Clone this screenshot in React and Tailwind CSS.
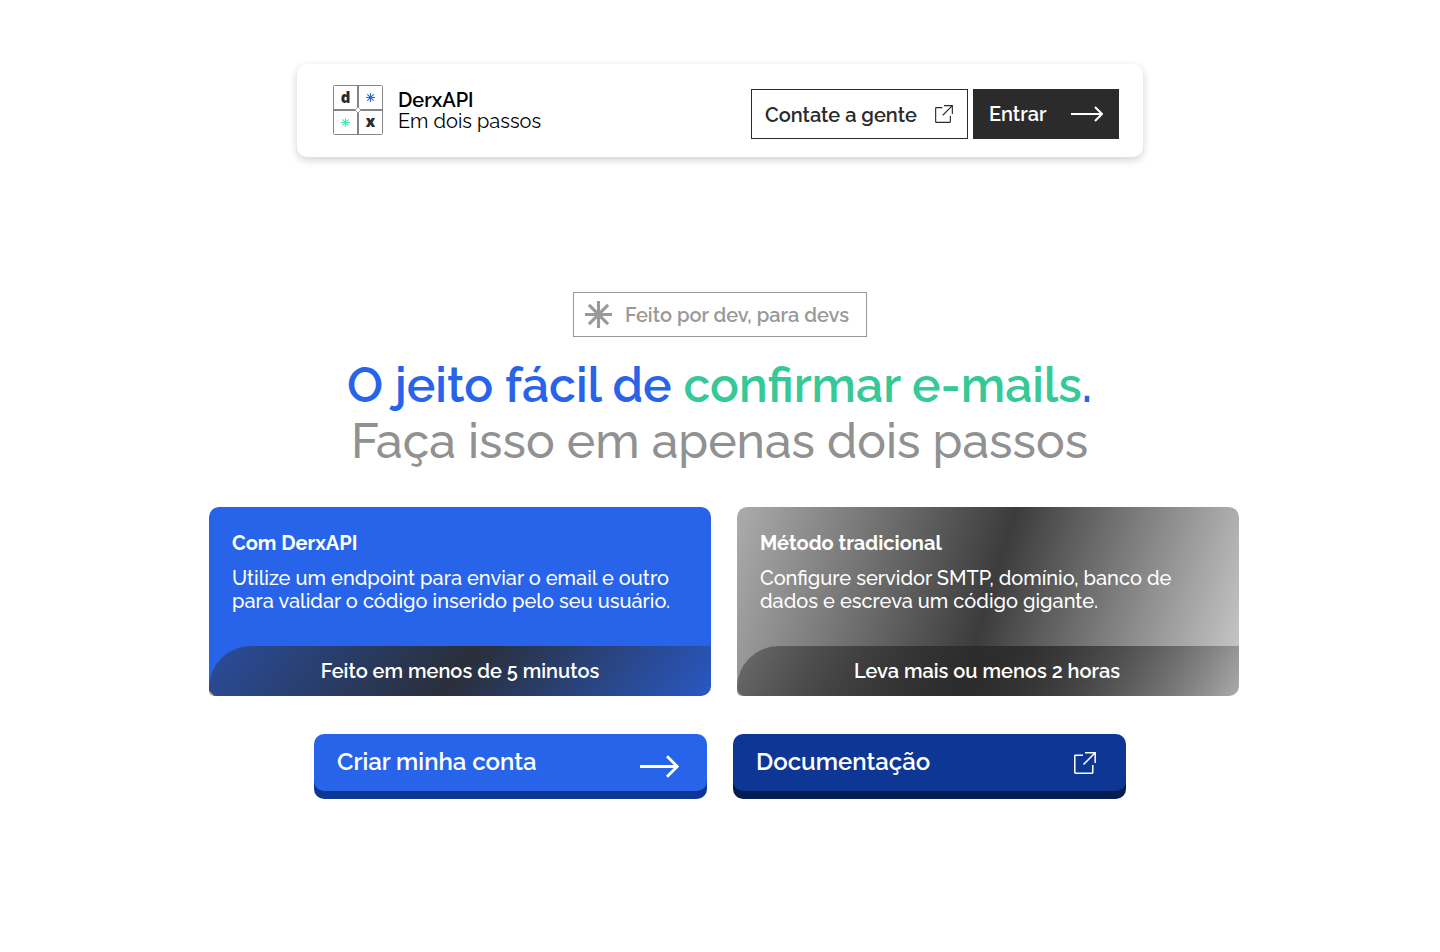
import React from 'react';

const cards = [
  {
    title: 'Com DerxAPI',
    lines: ['Utilize um endpoint para enviar o email e outro', 'para validar o código inserido pelo seu usuário.'],
    footer: 'Feito em menos de 5 minutos',
    background: 'bg-[radial-gradient(circle_at_0%_100%,#aaa69e_0_4px,#2864e9_5px)]',
    footerPadding: 'pr-0',
  },
  {
    title: 'Método tradicional',
    lines: ['Configure servidor SMTP, domínio, banco de', 'dados e escreva um código gigante.'],
    footer: 'Leva mais ou menos 2 horas',
    background: 'bg-[linear-gradient(107deg,#acacac_0%,#3c3c3c_50%,#cccccc_100%)]',
    footerPadding: 'pr-0.5',
  },
];

const Asterisk = ({ className }) => (
  <svg className={className} viewBox="0 0 26 26" fill="none" stroke="currentColor" strokeWidth="3">
    <path d="M13 0V26M0 13H26M3.8 3.8L22.2 22.2M22.2 3.8L3.8 22.2" />
  </svg>
);

const ExternalLink = ({ className, strokeWidth }) => (
  <svg className={className} viewBox="0 0 22 22" fill="none" stroke="currentColor" strokeWidth={strokeWidth}>
    <path d="M9 3.2H1.5Q.8 3.2 .8 3.9V20.5Q.8 21.2 1.5 21.2H18Q18.8 21.2 18.8 20.5V13" />
    <path d="M11 .8H21.2V11M21.2 .8L9.5 12.5" />
  </svg>
);

const Logo = () => (
  <svg className="h-[50px] w-[50px]" viewBox="0 0 50 50" fill="none">
    <rect x=".5" y=".5" width="49" height="49" rx="1" stroke="#858585" />
    <path d="M25 0V50M0 25H50" stroke="#858585" strokeWidth="2" />
    <path d="M25 22L28 25L25 28L22 25Z" fill="#fff" stroke="#858585" strokeWidth=".7" />
    <text x="12.5" y="18" textAnchor="middle" fontSize="15" fontWeight="800" fontFamily="Open Sans" fill="#2b2b2b">d</text>
    <text x="37.5" y="42" textAnchor="middle" fontSize="15" fontWeight="800" fontFamily="Open Sans" fill="#2b2b2b">x</text>
    <path d="M37.5 8V17M33 12.5H42M34.3 9.3L40.7 15.7M40.7 9.3L34.3 15.7" stroke="#2864e9" strokeWidth="1.15" />
    <path d="M12.5 33V42M8 37.5H17M9.3 34.3L15.7 40.7M15.7 34.3L9.3 40.7" stroke="#35f5bd" strokeWidth="1.15" />
  </svg>
);

const Card = ({ title, lines, footer, background, footerPadding }) => (
  <div className={`flex h-[189px] w-[502px] flex-col justify-between overflow-hidden rounded-[10px] rounded-bl-[5px] text-white ${background}`}>
    <div className="px-[23px] pt-[25px] text-xl leading-[23px] whitespace-nowrap">
      <h3 className="font-bold">{title}</h3>
      <p className="mt-3 font-medium">
        {lines.map((line) => (
          <span key={line} className="block">{line}</span>
        ))}
      </p>
    </div>
    <div className={`flex h-[50px] items-center justify-center rounded-b-[10px] rounded-tl-[50px] bg-[linear-gradient(128deg,rgba(42,42,42,0.4)_0%,rgba(42,42,42,0.92)_50%,rgba(42,42,42,0.2)_100%)] text-xl font-semibold ${footerPadding}`}>
      {footer}
    </div>
  </div>
);

const App = () => {
  return (
    <div className="min-h-screen bg-white pt-16 font-[Raleway,Lato,sans-serif] antialiased">
      <header className="mx-auto flex h-[93px] w-[846px] items-start justify-between rounded-[10px] pr-6 pl-9 shadow-[0_3px_8px_rgba(0,0,0,0.18)]">
        <div className="flex pt-[21px]">
          <Logo />
          <div className="ml-[15px] pt-[5px] text-xl leading-[21px] whitespace-nowrap text-black">
            <p className="font-semibold">DerxAPI</p>
            <p>Em dois passos</p>
          </div>
        </div>
        <div className="flex gap-[5px] pt-[25px] text-xl font-semibold whitespace-nowrap">
          <button className="flex h-[50px] w-[217px] items-center justify-between border border-[#2b2b2b] pr-[14px] pl-[13px] text-[#2b2b2b]">
            <span className="pt-0.5">Contate a gente</span>
            <ExternalLink className="h-[18px] w-[18px]" strokeWidth="1.4" />
          </button>
          <button className="flex h-[50px] w-[146px] items-center justify-between bg-[#2b2b2b] px-4 text-white">
            Entrar
            <svg className="h-4 w-8" viewBox="0 0 32 16" fill="none" stroke="currentColor" strokeWidth="2">
              <path d="M0 8H31M24 1L31 8L24 15" />
            </svg>
          </button>
        </div>
      </header>

      <main className="flex flex-col items-center whitespace-nowrap">
        <div className="mt-[135px] flex h-[45px] w-[294px] items-center border border-[#999] pl-[11px] text-xl font-semibold text-[#999]">
          <Asterisk className="mr-[13px] h-[27px] w-[27px]" />
          Feito por dev, para devs
        </div>

        <h1 className="mt-5 text-center text-5xl leading-[56px]">
          <span className="block pr-px font-semibold text-[#2864e9]">
            O jeito fácil de <span className="text-[#36c997]">confirmar e-mails</span>.
          </span>
          <span className="block pr-px font-medium text-[#919191]">Faça isso em apenas dois passos</span>
        </h1>

        <div className="mt-[38px] ml-2 flex gap-[26px]">
          {cards.map((card) => (
            <Card key={card.title} {...card} />
          ))}
        </div>

        <div className="mt-[38px] flex gap-[26px] text-2xl font-semibold text-white">
          <button className="flex h-[57px] w-[393px] items-center justify-between rounded-[10px] bg-[#2864e9] pr-7 pl-[23px] shadow-[0_8px_0_#0e3795]">
            <span className="pb-0.5">Criar minha conta</span>
            <svg className="mt-[7px] h-[23px] w-[39px]" viewBox="0 0 39 23" fill="none" stroke="currentColor" strokeWidth="2.8">
              <path d="M0 11.5H37M27 1.2L37.3 11.5L27 21.8" />
            </svg>
          </button>
          <button className="flex h-[57px] w-[393px] items-center justify-between rounded-[10px] bg-[#0e3795] pr-[30px] pl-[23px] shadow-[0_8px_0_#061d51]">
            <span className="pb-0.5">Documentação</span>
            <ExternalLink className="h-[22px] w-[22px]" strokeWidth="1.5" />
          </button>
        </div>
      </main>
    </div>
  );
};

export default App;
